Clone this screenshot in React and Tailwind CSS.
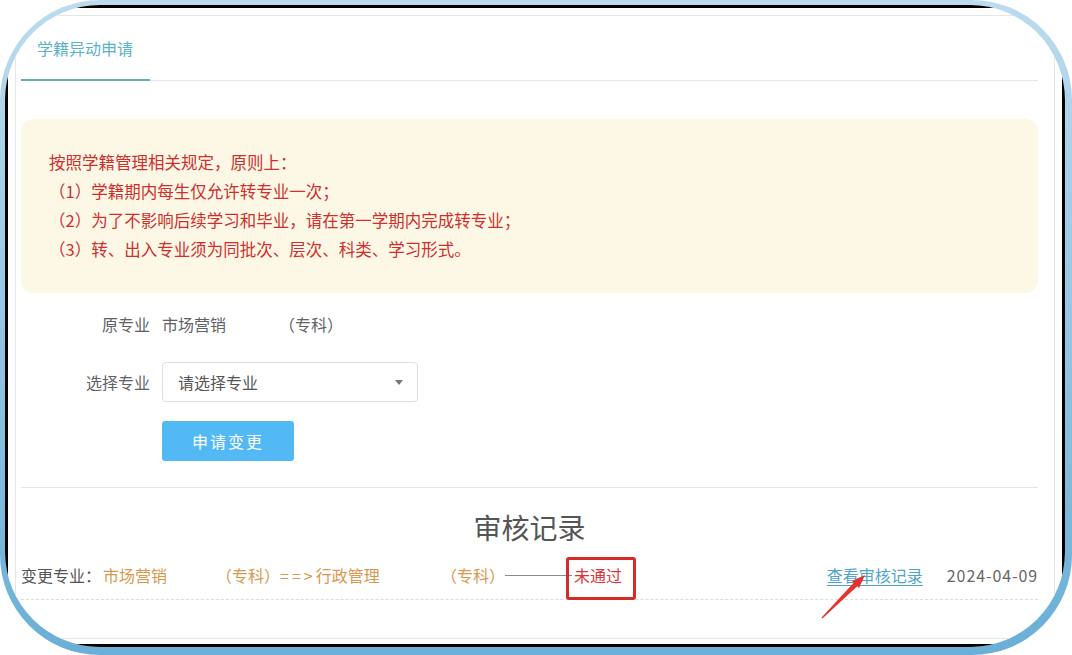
import React from 'react';

const font = { fontFamily: '"Noto Sans CJK SC", "Noto Sans", sans-serif' };

function Notice() {
    return (
        <div className="mt-[38px] rounded-[12px] bg-[#fdf8e5] pl-[28px] pt-[29px] pb-[29px] text-[16.5px] leading-[29px] text-[#cf2f2f]">
            <div>按照学籍管理相关规定，原则上：</div>
            <div>（1）学籍期内每生仅允许转专业一次；</div>
            <div>（2）为了不影响后续学习和毕业，请在第一学期内完成转专业；</div>
            <div>（3）转、出入专业须为同批次、层次、科类、学习形式。</div>
        </div>
    );
}

function RecordRow() {
    return (
        <div className="flex items-center pt-[2px] pb-[12px] leading-[24px] text-[16px] border-b border-dashed border-[#dcdcdc]">
            <span className="w-[82px] shrink-0 text-[#555]">变更专业：</span>
            <span className="w-[113px] shrink-0 text-[#d8984f]">市场营销</span>
            <span className="shrink-0 text-[#d8984f]">（专科）</span>
            <span className="w-[161px] shrink-0 text-[#d8984f]"><span className="tracking-[3px]">==&gt;</span>行政管理</span>
            <span className="shrink-0 text-[#d8984f]">（专科）</span>
            <span className="w-[67px] h-px bg-[#8a8a8a] shrink-0" />
            <span className="ml-[2px] text-[#d9363b]">未通过</span>
            <span className="flex-1" />
            <a className="text-[#4ea5c9] underline underline-offset-[3px]">查看审核记录</a>
            <span className="ml-[24px] text-[#666] tracking-[0.9px]">2024-04-09</span>
        </div>
    );
}

export default function App() {
    return (
        <div className="relative w-[1072px] h-[655px] bg-white overflow-hidden" style={font}>
            {/* blue rounded frame */}
            <div className="w-full h-full rounded-[100px] bg-gradient-to-b from-[#bcdcee] to-[#6aafd6] pt-[5px] pl-[5px] pr-[7px] pb-[8px]">
                <div className="w-full h-full rounded-[95px] overflow-hidden bg-white">
                    <div className="h-full border-[3px] border-black bg-white flex flex-col">
                        <div className="flex-1 mt-[7px] ml-[7px] mr-[7px] mb-[5px] border border-[#e6e6e6] pl-[5px] pr-[16px] flex flex-col">
                            {/* tabs */}
                            <div className="flex border-b border-[#e4e7ed] h-[65px]">
                                <div className="w-[129px] flex flex-col justify-between border-b-2 border-[#6aabbd] -mb-px">
                                    <span className="pl-[16px] pt-[20px] leading-[24px] text-[16px] text-[#5bb2c9]">学籍异动申请</span>
                                </div>
                            </div>

                            <Notice />

                            <div className="mt-[19px] flex items-center leading-[24px] text-[16px] text-[#606266]">
                                <span className="w-[129px] text-right">原专业</span>
                                <span className="ml-[12px] w-[117px]">市场营销</span>
                                <span>（专科）</span>
                            </div>

                            <div className="mt-[26px] flex items-center text-[16px] text-[#606266]">
                                <span className="w-[129px] text-right">选择专业</span>
                                <div className="ml-[12px] w-[256px] h-[40px] border border-[#dcdfe6] rounded-[4px] flex items-center justify-between pl-[15px] pr-[14px]">
                                    <span className="text-[#555]">请选择专业</span>
                                    <svg width="8" height="5" viewBox="0 0 8 5"><path d="M0 0h8L4 5z" fill="#777" /></svg>
                                </div>
                            </div>

                            <div className="mt-[19px] pl-[141px]">
                                <button className="w-[132px] h-[40px] rounded-[3px] bg-[#52b9f5] text-white text-[16px] tracking-[2px]">申请变更</button>
                            </div>

                            <div className="mt-[26px] border-t border-[#e5e5e5]" />

                            <div className="mt-[21px] text-center text-[28px] leading-[36px] text-[#555]">审核记录</div>

                            <div className="mt-[16px]">
                                <RecordRow />
                            </div>
                        </div>
                    </div>
                </div>
            </div>

            {/* annotation box */}
            <div className="absolute left-[566px] top-[557px] w-[70px] h-[43px] border-[3px] border-[#d52a26] rounded-[3px]" />
            {/* annotation arrow */}
            <svg className="absolute left-[815px] top-[570px]" width="55" height="55" viewBox="0 0 55 55">
                <polygon points="6.6,47.6 38.7,12.7 37,11 50,5 44,18 42.3,16.3 7.4,48.4" fill="#e5322d" />
            </svg>
        </div>
    );
}
